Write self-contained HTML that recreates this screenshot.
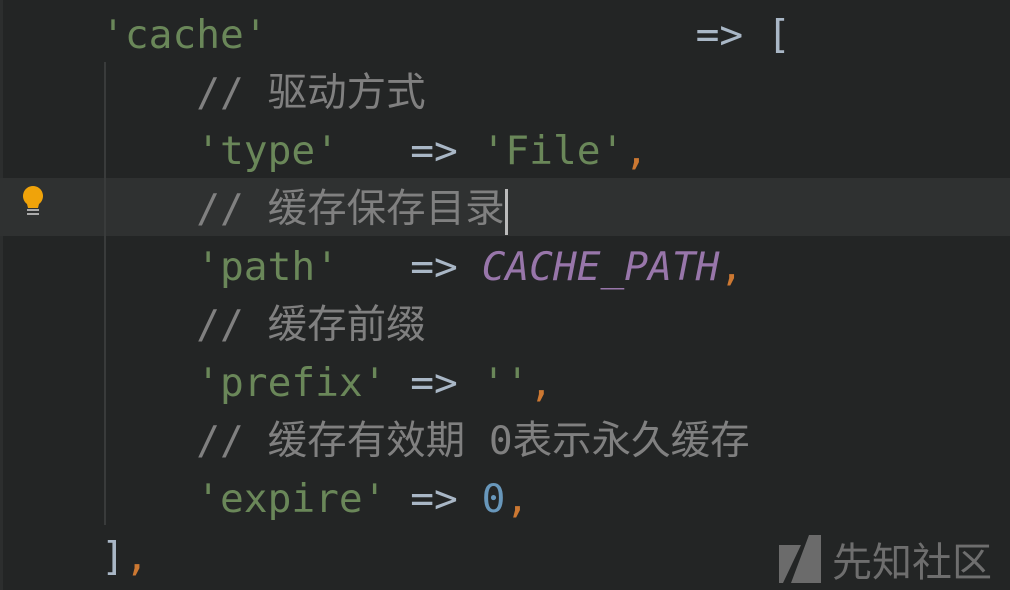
<!DOCTYPE html>
<html><head><meta charset="utf-8"><style>
body{margin:0;width:1010px;height:590px;background:#232525;overflow:hidden;position:relative;font-family:"DejaVu Sans Mono","Liberation Mono","Noto Sans CJK SC",monospace;font-size:39.5px;}
.l{position:absolute;left:6px;height:58px;line-height:58px;white-space:pre;color:#a9b7c6;}
.s{color:#6a8759}.c{color:#808080;font-family:"DejaVu Sans Mono","Noto Sans CJK SC",monospace}.o{color:#cc7832}.p{color:#9876aa;font-style:italic}.n{color:#6897bb}
.hl{position:absolute;left:0;top:178px;width:1010px;height:58px;background:#2f3131}
.guide{position:absolute;left:104px;top:62px;width:2px;height:463px;background:#393b3b}
.edge{position:absolute;left:0;top:0;width:3px;height:590px;background:#2c2e2e}
</style></head><body>
<div class="edge"></div>
<div class="hl"></div>
<div class="guide"></div>
<svg style="position:absolute;left:20px;top:184px" width="26" height="34" viewBox="0 0 26 34"><path d="M13 2a10 10 0 0 0-6 18l1 4h10l1-4a10 10 0 0 0-6-18z" fill="#f0a30a"/><rect x="7" y="25" width="12" height="2" fill="#aaa"/><rect x="7" y="29" width="12" height="2" fill="#aaa"/></svg>
<div class="l" style="top:6px">    <span class="s">'cache'</span>                  =&gt; [</div>
<div class="l" style="top:64px">        <span class="c">// 驱动方式</span></div>
<div class="l" style="top:122px">        <span class="s">'type'</span>   =&gt; <span class="s">'File'</span><span class="o">,</span></div>
<div class="l" style="top:180px">        <span class="c">// 缓存保存目录</span><span style="display:inline-block;width:3px;height:46px;background:#bbb;vertical-align:middle"></span></div>
<div class="l" style="top:238px">        <span class="s">'path'</span>   =&gt; <span class="p">CACHE_PATH</span><span class="o">,</span></div>
<div class="l" style="top:296px">        <span class="c">// 缓存前缀</span></div>
<div class="l" style="top:354px">        <span class="s">'prefix'</span> =&gt; <span class="s">''</span><span class="o">,</span></div>
<div class="l" style="top:412px">        <span class="c">// 缓存有效期 0表示永久缓存</span></div>
<div class="l" style="top:470px">        <span class="s">'expire'</span> =&gt; <span class="n">0</span><span class="o">,</span></div>
<div class="l" style="top:528px">    ]<span class="o">,</span></div>
<svg style="position:absolute;left:779px;top:535px" width="42" height="48" viewBox="0 0 42 48"><path d="M0 10h22L4 48H0z M30 0h12v48H12z" fill="#6b6b6b"/></svg>
<div style="position:absolute;left:832px;top:534px;font-family:'Noto Sans CJK SC',sans-serif;font-size:40px;line-height:50px;color:#6e6e6e">先知社区</div>
</body></html>
